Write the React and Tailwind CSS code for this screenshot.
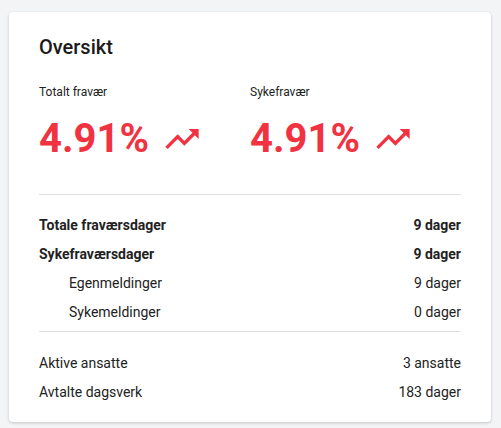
export default function App() {
  const Trend = () => (
    <svg width="40" height="40" viewBox="0 0 24 24" fill="currentColor" className="ml-[13px]">
      <path d="M16 6l2.29 2.29-4.88 4.88-4-4L2 16.59 3.41 18l6-6 4 4 6.3-6.29L22 12V6z" />
    </svg>
  );
  const Stat = ({ label }) => (
    <div className="flex flex-col">
      <div className="text-[12px] leading-[16px] text-[#222]">{label}</div>
      <div className="flex items-center text-[#f03241] mt-[15px]">
        <span className="text-[40px] leading-[48px] font-bold">4.91%</span>
        <Trend />
      </div>
    </div>
  );
  const Row = ({ label, value, bold, indent }) => (
    <div className={`flex h-[29px] items-center justify-between text-[14px] text-[#222] ${bold ? "font-bold" : ""}`}>
      <span className={indent ? "pl-[30px]" : ""}>{label}</span>
      <span>{value}</span>
    </div>
  );
  return (
    <div className="min-h-[428px] bg-[#f3f4f6] pt-[12px] px-[9px]" style={{ fontFamily: "Roboto, sans-serif" }}>
      <div className="w-[482px] bg-white rounded-[4px] shadow-[0_1px_3px_rgba(0,0,0,0.2)] px-[30px] pt-[21px] pb-[15px]">
        <div className="text-[20px] leading-[28px] font-medium text-[#1a1a1a]">Oversikt</div>
        <div className="grid grid-cols-2 mt-[23px]">
          <Stat label="Totalt fravær" />
          <Stat label="Sykefravær" />
        </div>
        <div className="h-px bg-[#e0e0e0] mt-[31px]" />
        <div className="mt-[16px]">
          <Row label="Totale fraværsdager" value="9 dager" bold />
          <Row label="Sykefraværsdager" value="9 dager" bold />
          <Row label="Egenmeldinger" value="9 dager" indent />
          <Row label="Sykemeldinger" value="0 dager" indent />
        </div>
        <div className="h-px bg-[#e0e0e0] mt-[4px]" />
        <div className="mt-[17px]">
          <Row label="Aktive ansatte" value="3 ansatte" />
          <Row label="Avtalte dagsverk" value="183 dager" />
        </div>
      </div>
    </div>
  );
}
